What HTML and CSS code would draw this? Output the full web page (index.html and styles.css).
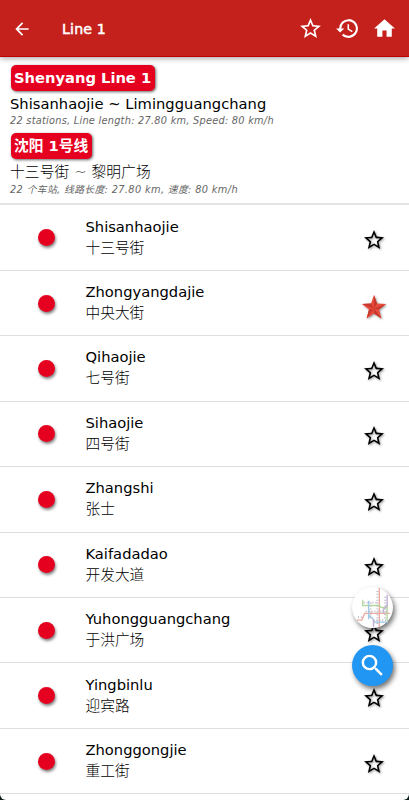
FILE: index.html
```html
<!DOCTYPE html>
<html lang="en">
<head>
  <meta charset="UTF-8" />
  <meta name="viewport" content="width=device-width, initial-scale=1.0"/>
  <title>Line 1</title>
  <link rel="stylesheet" href="styles.css">
</head>
<body>
  <svg width="0" height="0" class="sprite">
    <symbol id="star" viewBox="0 0 24 24">
      <path d="M22 9.24l-7.19-.62L12 2 9.19 8.63 2 9.24l5.46 4.73L5.82 21 12 17.27 18.18 21l-1.63-7.03L22 9.24zM12 15.4l-3.76 2.27 1-4.28-3.32-2.88 4.38-.38L12 6.1l1.71 4.04 4.38.38-3.32 2.88 1 4.28L12 15.4z"/>
    </symbol>
    <symbol id="star-red" viewBox="0 0 24 24">
      <path fill="#e94b3c" d="M12 0l3 8.6 9 .4-7 5.6 2.4 8.9L12 18.5l-7.4 5L7 14.6 0 9l9-.4z"/>
      <path fill="#c8382c" d="M12 0v13.5L15 8.6zM24 9l-12 4.5 5 1.1zM19.4 23.5L12 13.5v5zM4.6 23.5L12 13.5l-5 1.1zM0 9l12 4.5L9 8.6z"/>
    </symbol>
  </svg>
  <div class="app">
    <header class="navbar">
      <svg class="back" viewBox="0 0 24 24"><path d="M20 11H7.83l5.59-5.59L12 4l-8 8 8 8 1.41-1.41L7.83 13H20v-2z"/></svg>
      <span class="title">Line 1</span>
      <svg class="nav-icon"><use href="#star"/></svg>
      <svg class="nav-icon" viewBox="0 0 24 24"><path d="M13 3a9 9 0 0 0-9 9H1l3.9 3.9L9 12H6a7 7 0 1 1 2.06 4.94l-1.42 1.42A9 9 0 1 0 13 3zm-1 5v5l4.28 2.54.72-1.21-3.5-2.08V8H12z"/></svg>
      <svg class="nav-icon" viewBox="0 0 24 24"><path d="M10 20v-6h4v6h5v-8h3L12 3 2 12h3v8z"/></svg>
    </header>

    <section class="info">
      <div class="badge">Shenyang Line 1</div>
      <div class="route">Shisanhaojie ~ Limingguangchang</div>
      <div class="detail">22 stations, Line length: 27.80 km, Speed: 80 km/h</div>
      <div class="badge">沈阳 1号线</div>
      <div class="route local">十三号街 ~ 黎明广场</div>
      <div class="detail detail-local">22 个车站, 线路长度: 27.80 km, 速度: 80 km/h</div>
    </section>

    <div id="stationList"></div>
  </div>

  <div class="floating">
    <div class="fab map">
      <svg viewBox="0 0 42 42" fill="none" stroke-width="1">
        <path stroke="#efaaa0" stroke-width="1.4" d="M28 1v40M5 34h5l3-7h26"/>
        <path stroke="#b5d99c" stroke-width="1.4" d="M11 13v6h17l2 2h6M36 18v17"/>
        <path stroke="#9cc9e6" stroke-width="1.4" d="M17 14v19M17 29l4 3 2 4h14"/>
        <path stroke="#c3add8" stroke-width="1.4" d="M36 8v11l-4 4v4M22 33v8"/>
        <path stroke="#b9b9c8" stroke-width="2" stroke-dasharray="1 2" d="M12 16h14M14 25h22M19 16v16M26 4v34M34 10v23M22 34h14M6 31h5"/>
      </svg>
    </div>
    <div class="fab search">
      <svg viewBox="0 0 24 24"><path d="M15.5 14h-.79l-.28-.27A6.47 6.47 0 0 0 16 9.5 6.5 6.5 0 1 0 9.5 16c1.61 0 3.09-.59 4.23-1.57l.27.28v.79l5 4.99L20.49 19l-4.99-5zm-6 0a4.5 4.5 0 1 1 0-9 4.5 4.5 0 0 1 0 9z"/></svg>
    </div>
  </div>

  <script>
    const stations = [
      { name: "Shisanhaojie", local: "十三号街" },
      { name: "Zhongyangdajie", local: "中央大街", favorite: true },
      { name: "Qihaojie", local: "七号街" },
      { name: "Sihaojie", local: "四号街" },
      { name: "Zhangshi", local: "张士" },
      { name: "Kaifadadao", local: "开发大道" },
      { name: "Yuhongguangchang", local: "于洪广场" },
      { name: "Yingbinlu", local: "迎宾路" },
      { name: "Zhonggongjie", local: "重工街" }
    ];

    document.getElementById("stationList").innerHTML = stations.map(s => `
      <div class="station">
        <span class="dot"></span>
        <div class="names">
          <div>${s.name}</div>
          <div class="local">${s.local}</div>
        </div>
        <svg class="star${s.favorite ? " favorite" : ""}"><use href="#${s.favorite ? "star-red" : "star"}"/></svg>
      </div>
    `).join("");
  </script>
</body>
</html>
```

FILE: styles.css
```css
* {
  box-sizing: border-box;
}

body {
  margin: 0;
  height: 800px;
  overflow: hidden;
  background: #0c1a1c;
  color: #000;
  font-family: "DejaVu Sans", "Noto Sans CJK SC", sans-serif;
  font-size: 14.7px;
}

.sprite {
  position: absolute;
}

.app {
  height: 800px;
  overflow: hidden;
  background: #fff;
  border-radius: 0 0 6px 6px;
}

.navbar {
  display: flex;
  align-items: center;
  height: 57px;
  padding: 1px 12px 0;
  background: #c4211c;
  border-bottom: 1px solid #c00000;
  box-shadow: 0 1px 6px rgba(0, 0, 0, 0.4);
  color: #fff;
  fill: #fff;
}

.back {
  width: 20px;
  height: 20px;
}

.title {
  flex: 1;
  margin-left: 30px;
  font-size: 14.2px;
  letter-spacing: 0.15px;
  -webkit-text-stroke: 0.5px #fff;
}

.nav-icon {
  width: 25px;
  height: 25px;
  margin-left: 12px;
}

.info {
  height: 148.4px;
  padding: 8px 11px 0;
  border-bottom: 2px solid #e3e3e3;
}

.badge {
  width: fit-content;
  height: 26px;
  padding: 0 4px 0 3px;
  border-radius: 5px;
  background: #e60020;
  box-shadow: 1px 1px 3px rgba(0, 0, 0, 0.6);
  color: #fff;
  font-weight: bold;
  line-height: 26px;
}

.route {
  height: 23px;
  margin-left: -1px;
  letter-spacing: 0.03px;
  line-height: 25px;
}

.detail {
  height: 19px;
  margin-left: -1px;
  color: #666;
  font-size: 9.8px;
  font-style: italic;
  letter-spacing: 0.24px;
  line-height: 14px;
  white-space: nowrap;
}

.detail-local {
  letter-spacing: 0.35px;
  line-height: 15px;
}

.local {
  font-weight: 300;
}

.route.local {
  letter-spacing: 0.15px;
}

.station {
  display: flex;
  align-items: center;
  height: 65.45px;
  padding: 0 23px 0 38px;
  border-bottom: 1px solid #dedede;
}

.dot {
  width: 17px;
  height: 17px;
  border-radius: 50%;
  background: #e60020;
  box-shadow: 1px 2px 3px rgba(0, 0, 0, 0.5);
}

.names {
  flex: 1;
  margin: -2px 0 0 30.5px;
  line-height: 21px;
}

.star {
  width: 24px;
  height: 24px;
  margin-top: 5px;
  filter: drop-shadow(1px 1px 1px rgba(0, 0, 0, 0.4));
}

.favorite {
  margin-top: 8px;
}

.floating {
  position: absolute;
  right: 16px;
  top: 587px;
  display: flex;
  flex-direction: column;
  gap: 17px;
}

.fab {
  width: 41px;
  height: 41px;
  border-radius: 50%;
  box-shadow: 2px 3px 5px rgba(0, 0, 0, 0.55);
}

.map {
  background: #fff;
}

.map svg {
  display: block;
}

.search {
  display: flex;
  align-items: center;
  justify-content: center;
  background: #2196f3;
}

.search svg {
  width: 29px;
  height: 29px;
  fill: #fff;
}
```
